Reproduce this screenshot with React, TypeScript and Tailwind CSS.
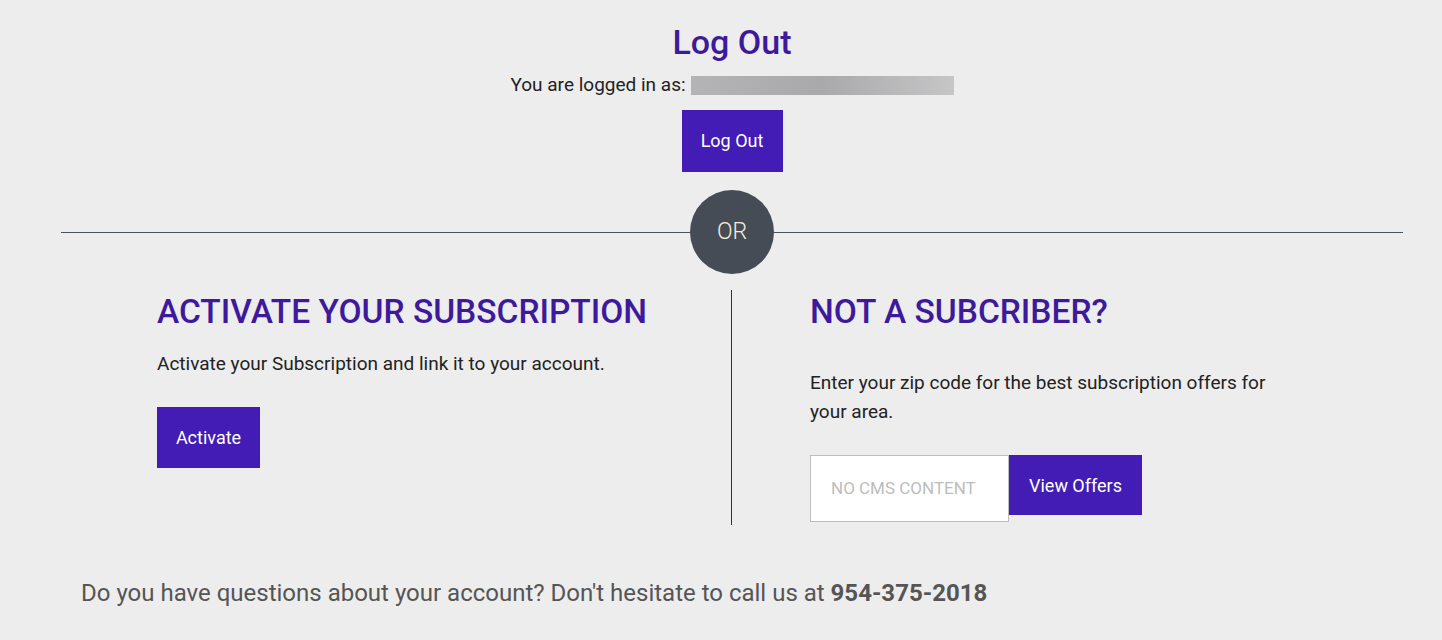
import React from "react";

export default function App() {
  return (
    <div className="min-h-[640px] w-full bg-[#ededed] text-[#222] pt-[20px]" style={{ fontFamily: "Roboto, 'Liberation Sans', sans-serif" }}>
      <div className="ml-[61px] w-[1342px]">
        <div className="flex flex-col items-center">
          <h1 className="text-[34px] leading-[44px] font-medium text-[#3d1a9c]">Log Out</h1>
          <div className="mt-[10px] flex items-center text-[19px] leading-[22px] text-[#222]">
            <span>You are logged in as:</span>
            <span className="ml-[5px] inline-block h-[19px] w-[263px] bg-gradient-to-r from-[#b4b4b6] via-[#a9a9ab] to-[#c6c6c7]" />
          </div>
          <button className="mt-[14px] h-[62px] w-[101px] bg-[#421cb4] pb-[2px] text-[18px] text-white">Log Out</button>
        </div>

        <div className="relative mt-[18px] flex h-[84px] items-center justify-center">
          <div className="absolute left-0 right-0 top-[42px] h-px bg-[#4a525c]" />
          <div className="relative flex h-[84px] w-[84px] items-center justify-center rounded-full bg-[#464c55] text-[23px] font-light text-[#f2eedc]">OR</div>
        </div>

        <div className="mt-[16px] flex">
          <div className="w-[671px] border-r border-[#333] pl-[96px] pb-[57px] pt-[2px]">
            <h2 className="text-[33.5px] leading-[40px] font-medium text-[#3d1a9c]">ACTIVATE YOUR SUBSCRIPTION</h2>
            <p className="mt-[17px] text-[19px] leading-[29px]">Activate your Subscription and link it to your account.</p>
            <button className="mt-[29px] h-[61px] w-[103px] bg-[#421cb4] text-[18px] text-white">Activate</button>
          </div>
          <div className="flex-1 pl-[78px] pt-[2px]">
            <h2 className="text-[33.5px] leading-[40px] font-medium text-[#3d1a9c]">NOT A SUBCRIBER?</h2>
            <p className="mt-[36px] w-[470px] text-[19px] leading-[29px]">Enter your zip code for the best subscription offers for your area.</p>
            <div className="mt-[29px] flex items-start">
              <div className="flex h-[67px] w-[199px] items-center border border-[#bdbdbd] bg-white pl-[20px] text-[17px] text-[#bdbdbd]">NO CMS CONTENT</div>
              <button className="h-[60px] w-[133px] bg-[#421cb4] text-[18px] text-white">View Offers</button>
            </div>
          </div>
        </div>
      </div>

      <p className="mt-[53px] pl-[81px] text-[24px] leading-[30px] text-[#555]">
        Do you have questions about your account? Don't hesitate to call us at <b className="font-bold">954-375-2018</b>
      </p>
    </div>
  );
}
